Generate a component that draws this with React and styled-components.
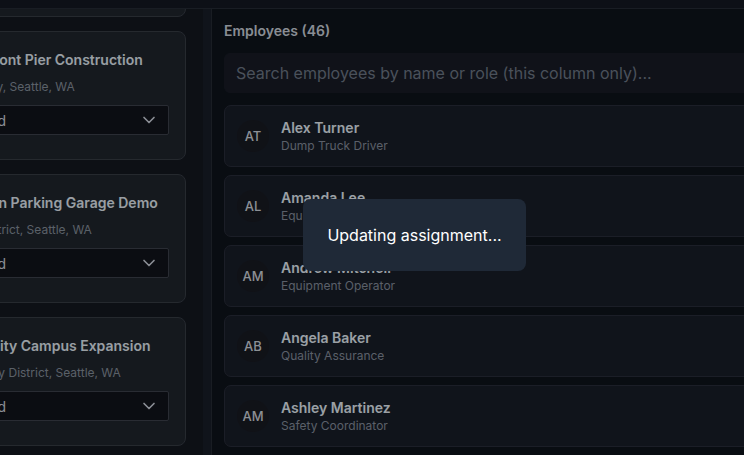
import React from "react";
import styled, { createGlobalStyle } from "styled-components";

const GlobalStyle = createGlobalStyle`
  * { box-sizing: border-box; }
  html, body { margin: 0; padding: 0; background: #0a0d12; overflow: hidden; }
  body { font-family: Inter, "Noto Sans", sans-serif; }
`;

const Page = styled.div`
  position: relative;
  width: 744px;
  height: 455px;
  overflow: hidden;
  display: flex;
  flex-direction: column;
  background: #0e131a;
`;

const TopBar = styled.header`
  flex: none;
  height: 9px;
  background: #141821;
  border-bottom: 1px solid #252a34;
`;

const Board = styled.main`
  flex: 1;
  min-height: 0;
  display: flex;
  margin-left: -85px;
`;

const ProjectColumn = styled.section`
  flex: none;
  width: 297px;
  display: flex;
  background: #13171f;
  overflow: hidden;
`;

const ProjectList = styled.div`
  flex: 1;
  min-width: 0;
  display: flex;
  flex-direction: column;
  gap: 14px;
  padding: 0 17px 0 16px;
  margin-top: -121px;
`;

const ScrollTrack = styled.div`
  flex: none;
  width: 9px;
  background: #181e27;
  border-right: 1px solid #252a33;
`;

const ProjectCard = styled.article`
  flex: none;
  height: 129px;
  background: #1f242c;
  border: 1px solid #353b43;
  border-radius: 8px;
  padding: 18px 16px 16px;
  display: flex;
  flex-direction: column;
`;

const ProjectTitle = styled.h3`
  margin: 0;
  font-size: 14px;
  line-height: 20px;
  font-weight: 600;
  color: #dce2ea;
  white-space: nowrap;
`;

const ProjectPlace = styled.p`
  margin: 8px 0 0;
  font-size: 12px;
  line-height: 18px;
  color: #828b97;
  white-space: nowrap;
`;

const StatusSelect = styled.div`
  margin-top: 9px;
  height: 30px;
  display: flex;
  align-items: center;
  justify-content: space-between;
  padding: 0 9px 0 11px;
  background: #11141b;
  border: 1px solid #3c404a;
  border-radius: 2px;
  font-size: 14px;
  color: #c7ccd6;
  svg { flex: none; }
`;

const EmployeeColumn = styled.section`
  flex: none;
  width: 620px;
  padding: 12px 12px 0;
  display: flex;
  flex-direction: column;
`;

const ColumnTitle = styled.h2`
  margin: 0;
  font-size: 14px;
  line-height: 20px;
  font-weight: 600;
  color: #c5cbd4;
`;

const Search = styled.input`
  margin-top: 12px;
  height: 40px;
  padding: 0 11px;
  background: #171b25;
  border: 1px solid #171b25;
  border-radius: 6px;
  font-family: inherit;
  font-size: 16px;
  color: #dfe5ed;
  outline: none;
  &::placeholder { color: #6b7482; }
`;

const EmployeeList = styled.div`
  margin-top: 12px;
  display: flex;
  flex-direction: column;
  gap: 8px;
`;

const EmployeeCard = styled.article`
  flex: none;
  height: 62px;
  display: flex;
  align-items: center;
  gap: 12px;
  padding: 0 12px;
  background: #181d27;
  border: 1px solid #272c38;
  border-radius: 7px;
`;

const Avatar = styled.div`
  flex: none;
  width: 32px;
  height: 32px;
  border-radius: 50%;
  background: #181a21;
  color: #c9ced6;
  font-size: 13px;
  font-weight: 500;
  display: grid;
  place-items: center;
`;

const Info = styled.div`
  display: flex;
  flex-direction: column;
`;

const Name = styled.div`
  font-size: 14px;
  line-height: 19px;
  font-weight: 600;
  color: #dfe5ed;
`;

const Role = styled.div`
  font-size: 12px;
  line-height: 17px;
  color: #818997;
`;

const Backdrop = styled.div`
  position: absolute;
  inset: 0;
  background: rgba(0, 0, 0, 0.3);
`;

const Toast = styled.div`
  position: absolute;
  left: 303px;
  top: 199px;
  width: 223px;
  height: 72px;
  display: grid;
  place-items: center;
  background: #1f2937;
  border-radius: 8px;
  color: #ffffff;
  font-size: 16px;
  line-height: 24px;
`;

const Chevron = () => (
  <svg width="20" height="20" viewBox="0 0 24 24" fill="none" stroke="currentColor" strokeWidth="2" strokeLinecap="round" strokeLinejoin="round">
    <path d="m6 9 6 6 6-6" />
  </svg>
);

const projects = [
  { title: "Harborview Medical Annex", place: "First Hill, Seattle, WA", status: "Closed" },
  { title: "Waterfront Pier Construction", place: "Elliott Bay, Seattle, WA", status: "Closed" },
  { title: "Midtown Parking Garage Demo", place: "Civic District, Seattle, WA", status: "Closed" },
  { title: "University Campus Expansion", place: "University District, Seattle, WA", status: "Closed" },
];

const employees = [
  { initials: "AT", name: "Alex Turner", role: "Dump Truck Driver" },
  { initials: "AL", name: "Amanda Lee", role: "Equipment Operator" },
  { initials: "AM", name: "Andrew Mitchell", role: "Equipment Operator" },
  { initials: "AB", name: "Angela Baker", role: "Quality Assurance" },
  { initials: "AM", name: "Ashley Martinez", role: "Safety Coordinator" },
];

export default function App() {
  return (
    <>
      <GlobalStyle />
      <Page>
        <TopBar />
        <Board>
          <ProjectColumn>
            <ProjectList>
              {projects.map((p) => (
                <ProjectCard key={p.title}>
                  <ProjectTitle>{p.title}</ProjectTitle>
                  <ProjectPlace>{p.place}</ProjectPlace>
                  <StatusSelect>
                    <span>{p.status}</span>
                    <Chevron />
                  </StatusSelect>
                </ProjectCard>
              ))}
            </ProjectList>
            <ScrollTrack />
          </ProjectColumn>
          <EmployeeColumn>
            <ColumnTitle>Employees (46)</ColumnTitle>
            <Search placeholder="Search employees by name or role (this column only)..." />
            <EmployeeList>
              {employees.map((e) => (
                <EmployeeCard key={e.name}>
                  <Avatar>{e.initials}</Avatar>
                  <Info>
                    <Name>{e.name}</Name>
                    <Role>{e.role}</Role>
                  </Info>
                </EmployeeCard>
              ))}
            </EmployeeList>
          </EmployeeColumn>
        </Board>
        <Backdrop />
        <Toast>Updating assignment...</Toast>
      </Page>
    </>
  );
}
